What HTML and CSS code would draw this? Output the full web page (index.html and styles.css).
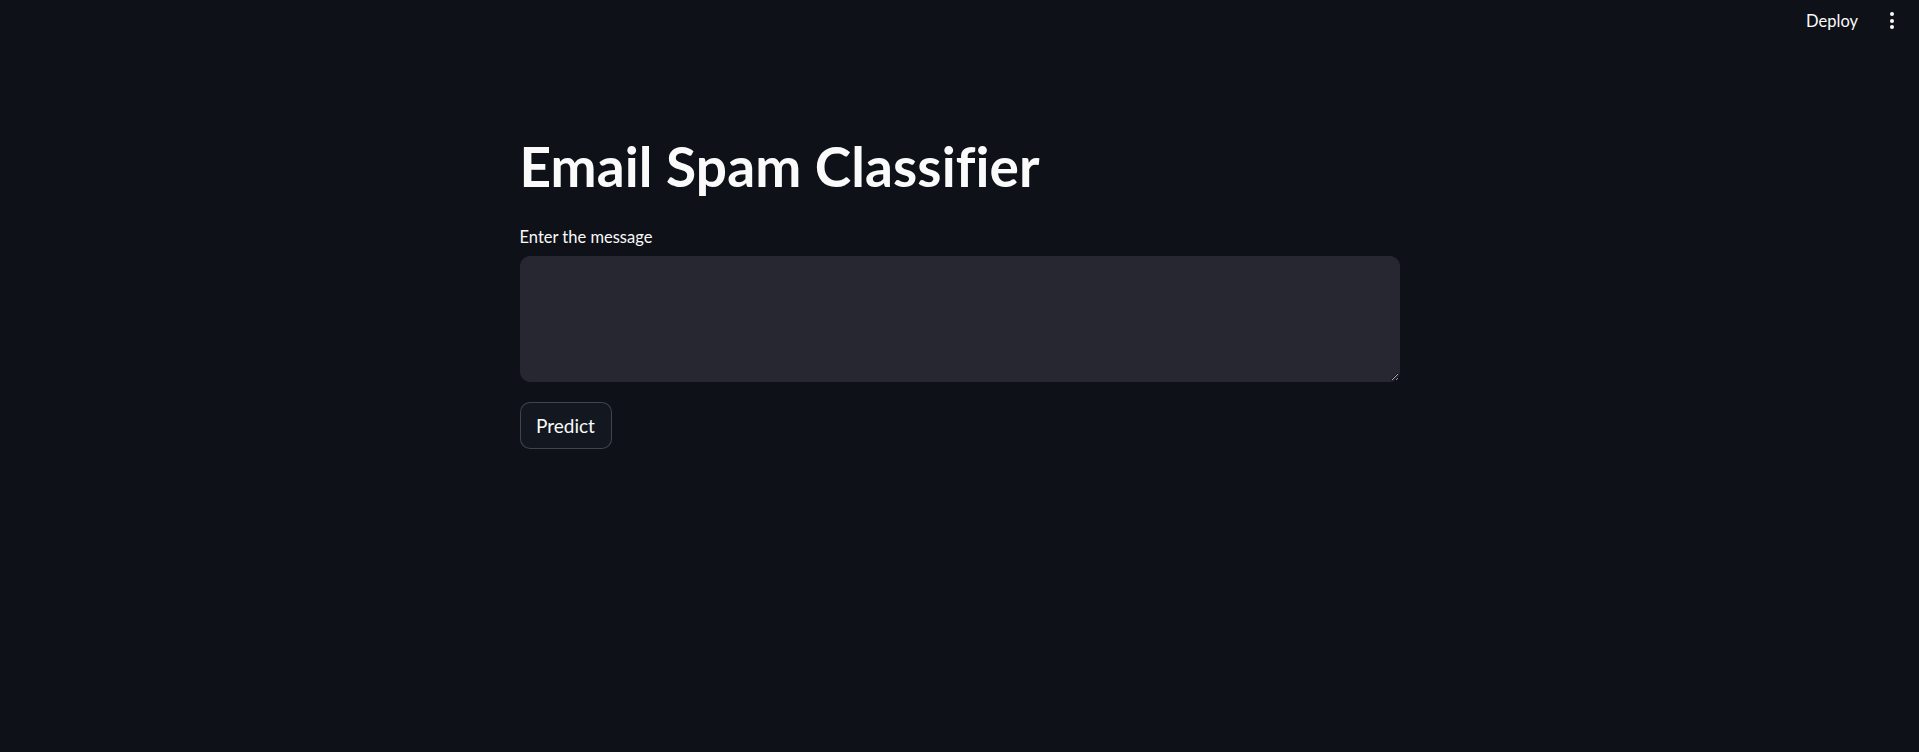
FILE: index.html
```html
<!DOCTYPE html>
<html lang="en">
<head>
<meta charset="utf-8">
<title>Email Spam Classifier</title>
<link rel="stylesheet" href="styles.css">
</head>
<body>
<header class="topbar">
  <span class="deploy">Deploy</span>
  <span class="menu" aria-label="menu"><i></i><i></i><i></i></span>
</header>
<main class="block">
  <h1 class="title">Email Spam Classifier</h1>
  <label class="label" for="msg">Enter the message</label>
  <textarea id="msg" class="area"></textarea>
  <button class="btn" type="button">Predict</button>
</main>
</body>
</html>
```
FILE: styles.css
```css
html,body{margin:0;padding:0;}
body{
  background:#0e1117;
  color:#fafafa;
  font-family:Lato,"Noto Sans",sans-serif;
  color-scheme:dark;
  min-height:752px;
}
.topbar{
  height:41px;
  display:flex;
  justify-content:flex-end;
  align-items:center;
  gap:32px;
  padding-right:25px;
}
.deploy{
  font-size:16.5px;
  line-height:20px;
  color:#fafafa;
}
.menu{
  display:flex;
  flex-direction:column;
  gap:2.5px;
  width:4px;
}
.menu i{
  display:block;
  width:4px;
  height:4px;
  border-radius:50%;
  background:#fafafa;
}
.block{
  width:880px;
  margin:0 auto;
  padding-top:92px;
  display:flex;
  flex-direction:column;
  align-items:flex-start;
}
.title{
  margin:0;
  font-size:55px;
  font-weight:700;
  line-height:66px;
  letter-spacing:0.1px;
}
.label{
  margin-top:28px;
  font-size:16.5px;
  line-height:20px;
}
.area{
  margin-top:9px;
  box-sizing:border-box;
  width:880px;
  height:126px;
  background:#262730;
  border:1px solid #262730;
  border-radius:10px;
  color:#fafafa;
  font-family:inherit;
  font-size:17.5px;
  padding:12px 14px;
  resize:vertical;
  outline:none;
}
.btn{
  margin-top:20px;
  box-sizing:border-box;
  width:92px;
  height:47px;
  background:#131720;
  border:1px solid rgba(250,250,250,0.2);
  border-radius:10px;
  color:#fafafa;
  font-family:inherit;
  font-size:19px;
  display:flex;
  align-items:center;
  justify-content:center;
  padding:0;
}
```
